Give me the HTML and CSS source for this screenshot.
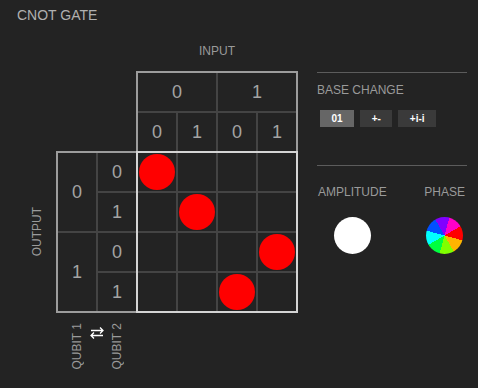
FILE: index.html
```html
<!DOCTYPE html>
<html lang="en">
<head>
  <meta charset="UTF-8" />
  <title>CNOT Gate</title>
  <link rel="stylesheet" href="styles.css">
</head>
<body>
  <h1 class="title">CNOT GATE</h1>

  <div class="main">
    <div class="diagram">
      <div class="input-label">INPUT</div>

      <div class="top-box">
        <div class="cell wide">0</div>
        <div class="cell wide">1</div>
        <div class="cell">0</div>
        <div class="cell">1</div>
        <div class="cell">0</div>
        <div class="cell">1</div>
      </div>

      <div class="output-label"><span class="vtext">OUTPUT</span></div>

      <div class="left-box">
        <div class="cell tall">0</div>
        <div class="cell">0</div>
        <div class="cell">1</div>
        <div class="cell tall">1</div>
        <div class="cell">0</div>
        <div class="cell">1</div>
      </div>

      <div class="matrix">
        <div class="cell"><span class="dot"></span></div>
        <div class="cell"></div>
        <div class="cell"></div>
        <div class="cell"></div>

        <div class="cell"></div>
        <div class="cell"><span class="dot"></span></div>
        <div class="cell"></div>
        <div class="cell"></div>

        <div class="cell"></div>
        <div class="cell"></div>
        <div class="cell"></div>
        <div class="cell"><span class="dot"></span></div>

        <div class="cell"></div>
        <div class="cell"></div>
        <div class="cell"><span class="dot"></span></div>
        <div class="cell"></div>
      </div>

      <div class="qubits">
        <span class="vtext qubit">QUBIT 1</span>
        <svg class="swap" width="14" height="13" viewBox="0 0 14 13">
          <path d="M1 4.5H13M10 1.5L13 4.5L10 7.5" fill="none" stroke="#fff" stroke-width="1.3"/>
          <path d="M13 9.5H1M4 6.5L1 9.5L4 12.5" fill="none" stroke="#fff" stroke-width="1.3"/>
        </svg>
        <span class="vtext qubit">QUBIT 2</span>
      </div>
    </div>

    <div class="panel">
      <div class="rule"></div>
      <div class="section-label">BASE CHANGE</div>
      <div class="base-buttons">
        <button class="active">01</button>
        <button>+-</button>
        <button>+i-i</button>
      </div>

      <div class="rule second"></div>
      <div class="legend">
        <div class="legend-item amp">
          <div class="section-label">AMPLITUDE</div>
          <span class="circle white"></span>
        </div>
        <div class="legend-item phase">
          <div class="section-label">PHASE</div>
          <span class="circle wheel"></span>
        </div>
      </div>
    </div>
  </div>
</body>
</html>
```

FILE: styles.css
```css
body {
  margin: 0;
  padding: 7px 0 0 17px;
  background: #232323;
  color: #a0a0a0;
  font-family: 'Liberation Sans', Arial, sans-serif;
}

.title {
  margin: 0;
  font-size: 14px;
  line-height: 16px;
  font-weight: normal;
  color: #b0b0b0;
}

.main {
  display: flex;
  align-items: flex-start;
  margin-top: 21px;
}

.diagram {
  display: grid;
  grid-template-columns: 39px 80px 162px;
  grid-template-rows: auto 80px 162px auto;
}

.input-label {
  grid-column: 3;
  grid-row: 1;
  text-align: center;
  font-size: 12px;
  line-height: 14px;
  padding-bottom: 13px;
  color: #9a9a9a;
}

.top-box,
.left-box,
.matrix {
  box-sizing: border-box;
  display: grid;
  gap: 2px;
  background: #444;
  border: 2px solid #9c9c9c;
}

.top-box {
  grid-column: 3;
  grid-row: 2;
  height: 82px;
  grid-template-columns: repeat(4, 38px);
  grid-template-rows: 38px 38px;
}

.left-box {
  grid-column: 2;
  grid-row: 3;
  width: 82px;
  grid-template-columns: 38px 38px;
  grid-template-rows: repeat(4, 38px);
}

.matrix {
  grid-column: 3;
  grid-row: 3;
  grid-template-columns: repeat(4, 38px);
  grid-template-rows: repeat(4, 38px);
  border-color: #d4d4d4;
}

.cell {
  background: #232323;
  display: flex;
  align-items: center;
  justify-content: center;
  font-size: 18px;
  color: #a4a4a4;
}

.cell.wide {
  grid-column: span 2;
}

.cell.tall {
  grid-row: span 2;
}

.dot {
  width: 36px;
  height: 36px;
  border-radius: 50%;
  background: #ff0000;
}

.vtext {
  writing-mode: vertical-rl;
  transform: rotate(180deg);
  font-size: 12px;
  color: #9a9a9a;
}

.output-label {
  grid-column: 1;
  grid-row: 3;
  display: flex;
  align-items: center;
  justify-content: center;
}

.qubits {
  grid-column: 2;
  grid-row: 4;
  display: flex;
  align-items: flex-start;
  padding: 10px 0 0 8px;
}

.qubit {
  width: 26px;
  line-height: 26px;
}

.swap {
  margin-top: 3px;
}

.panel {
  width: 150px;
  margin-left: 19px;
  margin-top: 28px;
}

.rule {
  border-top: 1px solid #5c5c5c;
}

.rule.second {
  margin-top: 38px;
}

.section-label {
  font-size: 12px;
  line-height: 14px;
  color: #9a9a9a;
  margin-top: 10px;
}

.base-buttons {
  display: flex;
  gap: 6px;
  margin-top: 13px;
  padding-left: 3px;
}

button {
  height: 17px;
  padding: 0 11.5px;
  border: none;
  border-radius: 0;
  background: #3a3a3a;
  color: #fff;
  font-family: 'Liberation Sans', Arial, sans-serif;
  font-size: 10px;
  font-weight: bold;
}

button.active {
  background: #666;
}

.legend {
  display: flex;
  justify-content: space-between;
  margin-top: 9px;
  padding: 0 2px 0 1px;
}

.legend-item {
  display: flex;
  flex-direction: column;
  align-items: center;
}

.circle {
  display: block;
  width: 37px;
  height: 37px;
  border-radius: 50%;
  margin-top: 18px;
}

.circle.white {
  background: #fff;
}

.circle.wheel {
  background: conic-gradient(from 15deg,
    #ff00c8 0deg 45deg,
    #ff0000 45deg 90deg,
    #ffb400 90deg 135deg,
    #80ff00 135deg 180deg,
    #00ff40 180deg 225deg,
    #00ffff 225deg 270deg,
    #0050ff 270deg 315deg,
    #8000ff 315deg 360deg);
}
```
